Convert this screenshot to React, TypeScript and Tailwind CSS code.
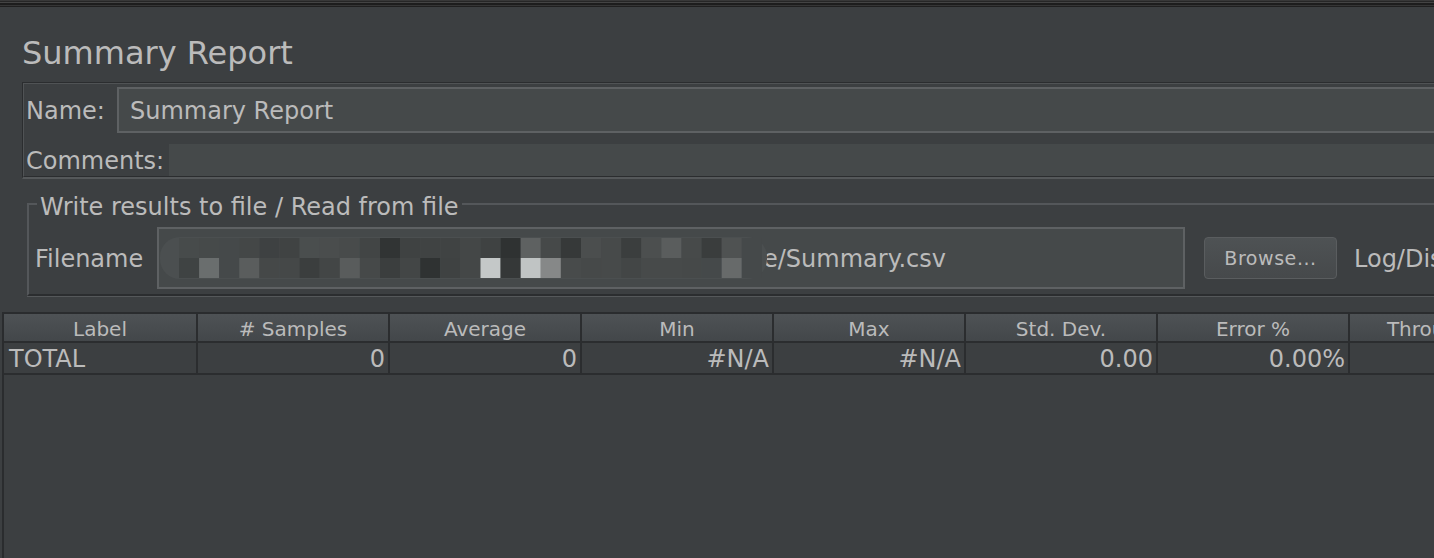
const rowA = ['#474b4b', '#464a4a', '#45494a', '#444747', '#3e4142', '#404343', '#4a4e4e', '#4a4d4d', '#484b4b', '#424545', '#313434', '#3f4242', '#404343', '#404343', '#444747', '#3f4242', '#2f3232', '#5e6161', '#464949', '#363939', '#4b4e4e', '#474a4a', '#3b3e3e', '#4c4f4f', '#5a5d5d', '#474a4a', '#3a3d3d', '#4f5252', '#45494a'];
const rowB = ['#3f4343', '#6a6e6e', '#45494a', '#5a5d5d', '#454848', '#454848', '#3b3e3e', '#434646', '#595c5c', '#464949', '#3b3e3e', '#434646', '#2f3232', '#3f4242', '#444747', '#c4c8c8', '#353838', '#c0c4c4', '#868888', '#484b4b', '#464949', '#474a4a', '#434646', '#474a4a', '#474a4a', '#464949', '#45494a', '#676a6a', '#45494a'];

const columns = ['Label', '# Samples', 'Average', 'Min', 'Max', 'Std. Dev.', 'Error %', 'Throughput', 'Received KB/sec', 'Sent KB/sec', 'Avg. Bytes'];
const totals = ['TOTAL', '0', '0', '#N/A', '#N/A', '0.00', '0.00%', '.0/sec', '.00', '.00', '.0'];

// blurred path in the filename field
function Mosaic() {
  return (
    <svg width="610" height="44" viewBox="0 0 610 44" className="relative z-10 shrink-0">
      <rect x="1" y="1" width="607" height="42" rx="20" fill="#4b4f50" />
      {rowA.map((c, i) => (
        <rect key={'a' + i} x={20 + i * 20.1} y="2" width="20.1" height="20" fill={c} />
      ))}
      {rowB.map((c, i) => (
        <rect key={'b' + i} x={20 + i * 20.1} y="22" width="20.1" height="20" fill={c} />
      ))}
    </svg>
  );
}

export default function App() {
  return (
    <div className="w-[1434px] h-[558px] overflow-hidden bg-[#3c3f41] text-[#bbbbbb] font-['DejaVu_Sans',sans-serif]">
      <div className="w-[1800px] h-full flex flex-col">
        <div className="flex flex-col shrink-0">
          <div className="h-px bg-[#383838]" />
          <div className="h-px bg-[#262626]" />
          <div className="h-px bg-[#444444]" />
          <div className="h-[2px] bg-[#1d1d1d]" />
          <div className="h-px bg-[#353535]" />
          <div className="h-px bg-[#1f1f1f]" />
        </div>

        <div className="pl-[22px] pt-[26px] shrink-0">
          <h1 className="text-[32px] leading-[40px] whitespace-nowrap">Summary Report</h1>

          <div className="mt-[9px] border-t border-l border-b-2 border-t-[#2b2d2f] border-l-[#2b2d2f] border-b-[#55585a]">
            <div className="border-t border-l border-b border-t-[#505355] border-l-[#505355] border-b-[#2b2d2f] pt-[3px] pl-[2px]">
              <div className="flex items-center">
                <span className="w-[91px] shrink-0 text-[24px] leading-[28px] pt-[2px]">Name:</span>
                <div className="flex-1 h-[46px] border-2 border-[#5e6163] bg-[#45494a] flex items-center pl-[11px] pt-[2px] text-[24px] leading-[28px]">
                  Summary Report
                </div>
              </div>
              <div className="flex items-center mt-[11px]">
                <span className="w-[143px] shrink-0 text-[24px] leading-[28px] pt-[1px]">Comments:</span>
                <div className="flex-1 h-[32px] bg-[#45494a]" />
              </div>
            </div>
          </div>

          <div className="ml-[5px] mt-[11px] border-b border-[#55585a]">
            <fieldset className="border-2 border-t-[#54575a] border-l-[#54575a] border-r-[#2b2d2f] border-b-[#2b2d2f] pl-[6px] pt-[9px] pb-[5px]">
              <legend className="ml-[2px] px-[3px] pt-[6px] text-[24px] leading-[22px] whitespace-nowrap">
                Write results to file / Read from file
              </legend>
              <div className="flex items-center whitespace-nowrap">
                <span className="w-[122px] shrink-0 text-[24px] leading-[28px] pt-[1px]">Filename</span>
                <div className="w-[1028px] shrink-0 h-[62px] border-2 border-[#5e6163] bg-[#45494a] flex items-center text-[24px] leading-[28px]">
                  <Mosaic />
                  <span className="-ml-[6px] pt-[1px]">e/Summary.csv</span>
                </div>
                <button className="ml-[19px] w-[133px] h-[42px] shrink-0 rounded-[4px] border border-[#5a5d5f] bg-linear-to-b from-[#4e5254] to-[#46494b] text-[19px] tracking-[0.03em] text-[#bbbbbb]">
                  Browse...
                </button>
                <span className="ml-[17px] text-[24px] leading-[28px] pt-[1px]">Log/Display Only:</span>
              </div>
            </fieldset>
          </div>
        </div>

        <div className="mt-[15px] ml-[2px] flex-1 border-l-2 border-t-2 border-[#2a2c2e] flex flex-col">
          <div className="flex h-[29px] border-b-2 border-[#2b2d2f] bg-linear-to-b from-[#4e5255] to-[#43474a] shrink-0">
            {columns.map((c, i) => (
              <div
                key={c}
                className={(i === 0 ? 'w-[194px]' : 'w-[192px]') + ' shrink-0 border-r-2 border-[#2b2d2f] text-center text-[20px] pt-[4px] leading-[23px] whitespace-nowrap'}
              >
                {c}
              </div>
            ))}
          </div>
          <div className="flex h-[32px] border-b-2 border-[#2b2d2f] shrink-0">
            {totals.map((t, i) => (
              <div
                key={i}
                className={(i === 0 ? 'w-[194px] text-left pl-[5px]' : 'w-[192px] text-right pr-[3px]') + ' shrink-0 border-r-2 border-[#2b2d2f] text-[24px] pt-[2px] leading-[28px] whitespace-nowrap'}
              >
                {t}
              </div>
            ))}
          </div>
          <div className="flex-1" />
        </div>
      </div>
    </div>
  );
}
